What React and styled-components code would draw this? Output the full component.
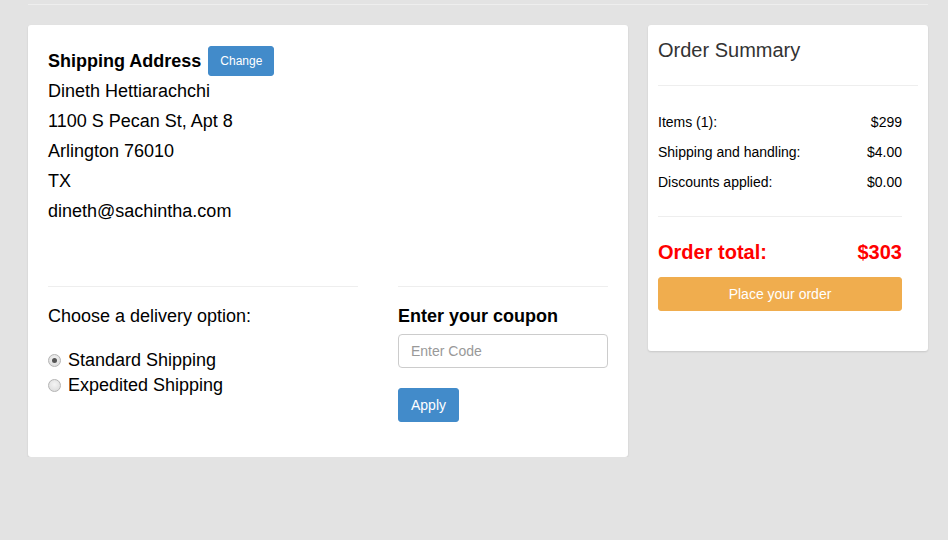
import React from 'react';
import styled, { createGlobalStyle } from 'styled-components';

const GlobalStyle = createGlobalStyle`
   html, body {
      margin: 0;
      padding: 0;
      background: #e3e3e3;
      font-family: 'Liberation Sans', Arial, sans-serif;
      color: #000;
   }
`;

const Page = styled.div`
   width: 900px;
   margin: 0 28px;
   padding-top: 4px;
`;

const TopRule = styled.hr`
   margin: 0 0 20px;
   border: 0;
   border-top: 1px solid #eeeeee;
`;

const Columns = styled.div`
   display: flex;
   gap: 20px;
   align-items: flex-start;
`;

const Card = styled.section`
   box-sizing: border-box;
   width: ${({ width }) => width}px;
   background: #fff;
   border-radius: 3px;
   box-shadow: 0 1px 2px rgba(0, 0, 0, 0.12);
   padding: ${({ pad }) => pad};
`;

const HeadingRow = styled.div`
   display: flex;
   align-items: center;
   gap: 7px;
   height: 30px;
`;

const Heading = styled.h3`
   margin: 0;
   font-size: 18px;
   font-weight: bold;
`;

const Button = styled.button`
   font-family: inherit;
   border: 1px solid ${({ bg }) => bg};
   background: ${({ bg }) => bg};
   color: #fff;
   border-radius: 3px;
   cursor: pointer;
   font-size: ${({ size }) => size}px;
   height: ${({ h }) => h}px;
   padding: 0 ${({ px }) => px}px;
   width: ${({ full }) => (full ? '100%' : 'auto')};
`;

const AddressLine = styled.p`
   margin: 0;
   font-size: 18px;
   line-height: 30px;
`;

const Lower = styled.div`
   display: flex;
   gap: 40px;
   margin-top: 60px;
`;

const Column = styled.div`
   width: ${({ width }) => width}px;
`;

const Rule = styled.hr`
   margin: 0;
   border: 0;
   border-top: 1px solid #eeeeee;
`;

const Label = styled.p`
   margin: 19px 0 0;
   font-size: 18px;
   line-height: 20px;
   font-weight: ${({ bold }) => (bold ? 'bold' : 'normal')};
`;

const Options = styled.div`
   margin-top: 22px;
   display: flex;
   flex-direction: column;
`;

const Option = styled.label`
   display: flex;
   align-items: center;
   gap: 7px;
   font-size: 18px;
   line-height: 25px;
`;

const Radio = styled.input`
   appearance: none;
   margin: 0;
   width: 13px;
   height: 13px;
   border-radius: 50%;
   border: 1px solid #b4b4b4;
   background: radial-gradient(circle at 50% 40%, #f4f4f4, #d8d8d8);
   display: grid;
   place-items: center;
   &:checked::after {
      content: '';
      width: 5px;
      height: 5px;
      border-radius: 50%;
      background: #555;
   }
`;

const CodeInput = styled.input`
   box-sizing: border-box;
   display: block;
   width: 100%;
   height: 34px;
   margin-top: 8px;
   padding: 0 12px;
   border: 1px solid #ccc;
   border-radius: 4px;
   font-family: inherit;
   font-size: 14px;
   &::placeholder {
      color: #999;
   }
`;

const ApplyWrap = styled.div`
   margin-top: 20px;
`;

const SummaryTitle = styled.h2`
   margin: 0;
   font-size: 20px;
   font-weight: normal;
   color: #333;
   line-height: 30px;
   padding-top: 10px;
   padding-bottom: 20px;
`;

const SummaryBody = styled.div`
   width: 244px;
`;

const Row = styled.div`
   display: flex;
   justify-content: space-between;
   font-size: 14px;
   line-height: 30px;
`;

const Rows = styled.div`
   padding: 21px 0 19px;
`;

const TotalRow = styled.div`
   display: flex;
   justify-content: space-between;
   color: #f00;
   font-weight: bold;
   font-size: 20px;
   line-height: 30px;
   margin: 20px 0 10px;
`;

const rows = [
   ['Items (1):', '$299'],
   ['Shipping and handling:', '$4.00'],
   ['Discounts applied:', '$0.00'],
];

export default function App() {
   return (
      <>
         <GlobalStyle />
         <Page>
            <TopRule />
            <Columns>
               <Card width={ 600 } pad='21px 20px 35px'>
                  <HeadingRow>
                     <Heading>Shipping Address</Heading>
                     <Button bg='#428bca' size={ 12 } h={ 30 } px={ 11 }>Change</Button>
                  </HeadingRow>
                  <AddressLine>Dineth Hettiarachchi</AddressLine>
                  <AddressLine>1100 S Pecan St, Apt 8</AddressLine>
                  <AddressLine>Arlington 76010</AddressLine>
                  <AddressLine>TX</AddressLine>
                  <AddressLine>dineth@sachintha.com</AddressLine>
                  <Lower>
                     <Column width={ 310 }>
                        <Rule />
                        <Label>Choose a delivery option:</Label>
                        <Options>
                           <Option>
                              <Radio type='radio' name='ship' defaultChecked />
                              Standard Shipping
                           </Option>
                           <Option>
                              <Radio type='radio' name='ship' />
                              Expedited Shipping
                           </Option>
                        </Options>
                     </Column>
                     <Column width={ 210 }>
                        <Rule />
                        <Label bold>Enter your coupon</Label>
                        <CodeInput placeholder='Enter Code' />
                        <ApplyWrap>
                           <Button bg='#428bca' size={ 14 } h={ 34 } px={ 12 }>Apply</Button>
                        </ApplyWrap>
                     </Column>
                  </Lower>
               </Card>
               <Card width={ 280 } pad='0 10px 40px'>
                  <SummaryTitle>Order Summary</SummaryTitle>
                  <Rule />
                  <SummaryBody>
                     <Rows>
                        { rows.map(([label, value]) => (
                           <Row key={ label }>
                              <span>{ label }</span>
                              <span>{ value }</span>
                           </Row>
                        )) }
                     </Rows>
                     <Rule />
                     <TotalRow>
                        <span>Order total:</span>
                        <span>$303</span>
                     </TotalRow>
                     <Button bg='#f0ad4e' size={ 14 } h={ 34 } px={ 12 } full>Place your order</Button>
                  </SummaryBody>
               </Card>
            </Columns>
         </Page>
      </>
   );
}
